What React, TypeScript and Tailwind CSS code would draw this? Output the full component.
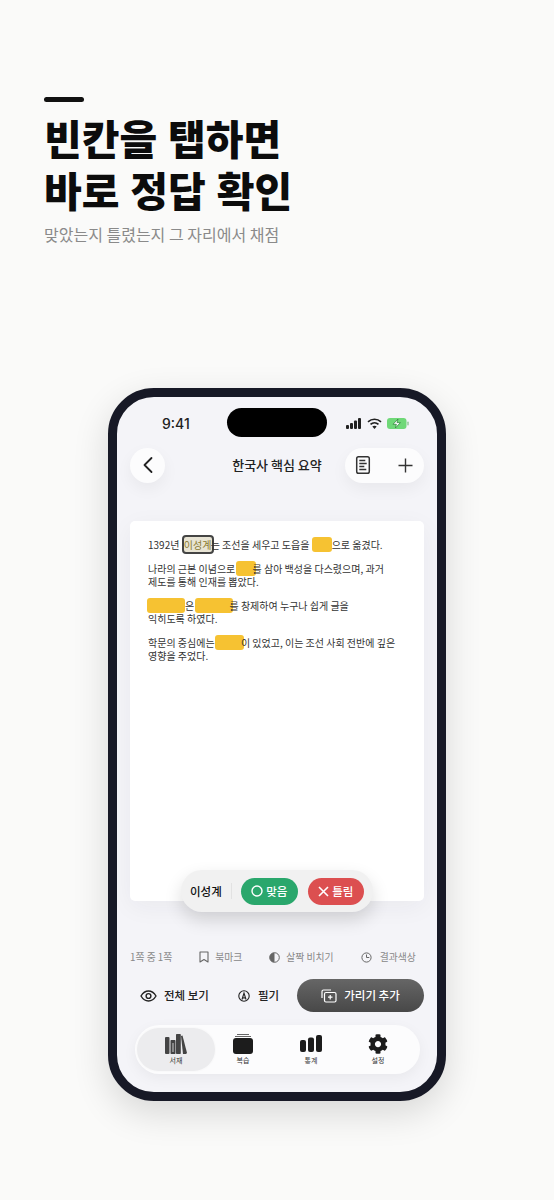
import { FaCog } from "react-icons/fa";

const KR = { fontFamily: '"Noto Sans CJK KR", "Noto Sans", sans-serif' };

function Blank({ w }: { w: string }) {
  return <span className={`inline-block align-top h-[15px] -my-[1px] rounded-[3px] bg-[#f6c232] ${w}`} />;
}

export default function App() {
  return (
    <div className="w-[554px] h-[1200px] bg-[#fafaf9] overflow-hidden flex flex-col" style={KR}>
      <div className="pl-[44px] pt-[97px] shrink-0">
        <div className="w-[40px] h-[5px] rounded-full bg-[#111]" />
        <h1 className="mt-[9px] text-[41px] leading-[52px] font-black text-[#0c0c0c] whitespace-nowrap [word-spacing:1.5px]">
          빈칸을 탭하면
          <br />
          바로 정답 확인
        </h1>
        <p className="mt-[7px] text-[16px] leading-[24px] text-[#8a8a8a]">맞았는지 틀렸는지 그 자리에서 채점</p>
      </div>
      <div className="ml-[108px] mt-[142px] w-[338px] h-[713px] shrink-0 rounded-[46px] border-[9px] border-[#171926] bg-[#f4f4f8] shadow-[0_12px_36px_rgba(0,0,0,0.14)] relative overflow-hidden flex flex-col">
        <div className="h-[46px] shrink-0 flex items-center justify-between pl-[45px] pr-[28px] pt-[6px] relative">
          <span className="text-[14px] font-medium text-[#222]" style={{ fontFamily: 'Inter, sans-serif' }}>9:41</span>
          <div className="absolute left-[110px] top-[11px] w-[100px] h-[29px] rounded-full bg-black" />
          <div className="flex items-center gap-[5px]">
            <svg width="16" height="11" viewBox="0 0 16 11"><rect x="0" y="7" width="3" height="4" rx="1" fill="#222"/><rect x="4" y="5" width="3" height="6" rx="1" fill="#222"/><rect x="8" y="2.500" width="3" height="8.500" rx="1" fill="#222"/><rect x="12" y="0" width="3" height="11" rx="1" fill="#222"/></svg>
            <svg width="15" height="11" viewBox="0 0 15 11" fill="none"><path d="M1 3.800C4.800.4 10.200.4 14 3.800" stroke="#222" strokeWidth="1.700"/><path d="M3.500 6.300C5.800 4.300 9.200 4.300 11.500 6.300" stroke="#222" strokeWidth="1.700"/><path d="M7.500 11 5.300 8.600c1.200-1 3.200-1 4.400 0z" fill="#222"/></svg>
            <svg width="22" height="11" viewBox="0 0 22 11"><rect x="0" y="0" width="19.500" height="11" rx="3" fill="#6fd878"/><rect x="20.200" y="3.500" width="1.600" height="4" rx="0.800" fill="#9ac9a0"/><path d="M11 1 6 6.300h3.400L8.400 10l5-5.400h-3.400z" fill="#fff" stroke="#2b7a38" strokeWidth="0.700"/></svg>
          </div>
        </div>
        <div className="h-[36px] mt-[4px] shrink-0 flex items-center justify-between px-[13px] relative">
          <button className="w-[35px] h-[35px] rounded-full bg-[#fcfcfd] shadow-[0_6px_16px_rgba(0,0,0,0.05)] flex items-center justify-center">
            <svg width="14" height="18" viewBox="0 0 14 18" fill="none"><path d="M10.500 2 3.500 9l7 7" stroke="#222" strokeWidth="1.800" strokeLinecap="round" strokeLinejoin="round"/></svg>
          </button>
          <span className="absolute left-0 right-0 text-center text-[13px] font-medium text-[#222]">한국사 핵심 요약</span>
          <div className="w-[79px] h-[35px] rounded-full bg-[#fcfcfd] shadow-[0_6px_16px_rgba(0,0,0,0.05)] flex items-center justify-between pl-[10px] pr-[11px]">
            <svg width="16" height="20" viewBox="0 0 16 20" fill="none"><rect x="1.700" y="1.700" width="12.600" height="16.600" rx="1.800" stroke="#333" strokeWidth="1.500"/><path d="M4.300 5.500h6M4.300 8.500h7.400M4.300 11.500h5M4.300 14.500h7" stroke="#333" strokeWidth="1.600"/></svg>
            <svg width="15" height="15" viewBox="0 0 15 15" fill="none"><path d="M7.500.5v14M.5 7.500h14" stroke="#333" strokeWidth="1.400"/></svg>
          </div>
        </div>
        <div className="relative mx-[13px] mt-[38px] h-[380px] shrink-0 rounded-[5px] bg-white shadow-[0_6px_24px_rgba(30,30,60,0.05)] pl-[18px] pt-[17px] text-[10px] leading-[13px] text-[#333]">
          <p className="whitespace-nowrap">
            1392년{" "}
            <span className="inline-block align-top -my-[3px] ml-[0px] -mr-[3px] h-[19px] w-[32px] text-center leading-[15px] rounded-[4px] border-2 border-[#444] bg-[#e8e4d4] text-[#8a7a30]">이성계</span>
            는 조선을 세우고 도읍을 <Blank w="w-[20px]" />으로 옮겼다.
          </p>
          <p className="mt-[11px] whitespace-nowrap">
            나라의 근본 이념으로 <span className="inline-block -ml-[2px] -mr-[3px] align-top"><Blank w="w-[20px]" /></span>를 삼아 백성을 다스렸으며, 과거
          </p>
          <p className="whitespace-nowrap">제도를 통해 인재를 뽑았다.</p>
          <p className="mt-[11px] whitespace-nowrap">
            <span className="inline-block -ml-[1px] align-top"><Blank w="w-[38px]" /></span>은 <span className="inline-block -ml-[1px] -mr-[4px] align-top"><Blank w="w-[38px]" /></span>를 창제하여 누구나 쉽게 글을
          </p>
          <p className="whitespace-nowrap">익히도록 하였다.</p>
          <p className="mt-[11px] whitespace-nowrap">
            학문의 중심에는 <span className="inline-block -ml-[2px] -mr-[3px] align-top"><Blank w="w-[29px]" /></span>이 있었고, 이는 조선 사회 전반에 깊은
          </p>
          <p className="whitespace-nowrap">영향을 주었다.</p>
          <div className="absolute left-[51px] top-[349px] w-[192px] h-[42px] rounded-full bg-[#f1f1f1] shadow-[0_8px_18px_rgba(0,0,0,0.14)] flex items-center pl-[9px]">
            <span className="text-[11.500px] font-medium text-[#111] whitespace-nowrap">이성계</span>
            <div className="w-px h-[16px] bg-[#e2e2e2] mx-[9px]" />
            <button className="w-[57px] h-[27px] rounded-full bg-[#2aa76c] text-white text-[11.500px] font-medium flex items-center justify-center gap-[3px]">
              <svg width="12" height="12" viewBox="0 0 12 12" fill="none"><circle cx="6" cy="6" r="5" stroke="#fff" strokeWidth="1.400"/></svg>
              맞음
            </button>
            <button className="ml-[10px] w-[56px] h-[27px] rounded-full bg-[#dc4f50] text-white text-[11.500px] font-medium flex items-center justify-center gap-[3px]">
              <svg width="11" height="11" viewBox="0 0 11 11" fill="none"><path d="M1 1l9 9M10 1l-9 9" stroke="#fff" strokeWidth="1.600"/></svg>
              틀림
            </button>
          </div>
        </div>
        <div className="mt-[46px] pl-[13px] h-[20px] flex items-center gap-[27px] text-[9.800px] text-[#888] whitespace-nowrap">
          <span>1쪽 중 1쪽</span>
          <span className="flex items-center gap-[6px]">
            <svg width="10" height="12" viewBox="0 0 10 12" fill="none"><path d="M1 1h8v10L5 8.500 1 11z" stroke="#666" strokeWidth="1.100" strokeLinejoin="round"/></svg>
            북마크
          </span>
          <span className="flex items-center gap-[6px]">
            <svg width="11" height="11" viewBox="0 0 11 11" fill="none"><circle cx="5.500" cy="5.500" r="4.800" stroke="#666" strokeWidth="1"/><path d="M5.500.7a4.800 4.800 0 0 0 0 9.600z" fill="#666"/></svg>
            살짝 비치기
          </span>
          <span className="flex items-center gap-[8px]">
            <svg width="11" height="11" viewBox="0 0 11 11" fill="none"><circle cx="5.500" cy="5.500" r="4.600" stroke="#666" strokeWidth="1"/><path d="M5.500 2.500v3h2.800" stroke="#666" strokeWidth="1"/></svg>
            결과색상
          </span>
        </div>
        <div className="mt-[12px] pl-[23px] pr-[13px] h-[33px] flex items-center">
          <span className="flex items-center gap-[7px] text-[11.500px] font-medium text-[#222] whitespace-nowrap">
            <svg width="17" height="12" viewBox="0 0 17 12" fill="none"><path d="M1 6c2-3.400 4.500-5 7.500-5S14 2.600 16 6c-2 3.400-4.500 5-7.500 5S3 9.400 1 6z" stroke="#222" strokeWidth="1.400"/><circle cx="8.500" cy="6" r="2.400" stroke="#222" strokeWidth="1.400"/></svg>
            전체 보기
          </span>
          <span className="ml-[29px] flex items-center gap-[8px] text-[11.500px] font-medium text-[#222] whitespace-nowrap">
            <svg width="12" height="12" viewBox="0 0 12 12" fill="none"><circle cx="6" cy="6" r="5.200" stroke="#222" strokeWidth="1.100"/><path d="M4 9.500 6 3l2 6.500M4.600 7.500c.8.600 2 .6 2.800 0" stroke="#222" strokeWidth="1.100"/></svg>
            필기
          </span>
          <button className="ml-auto w-[127px] h-[33px] rounded-full bg-gradient-to-b from-[#666] to-[#484848] text-white text-[11.500px] font-medium flex items-center justify-center gap-[7px] whitespace-nowrap">
            <svg width="16" height="14" viewBox="0 0 16 14" fill="none"><rect x="3.500" y="3.500" width="11.500" height="9.500" rx="1.500" stroke="#fff" strokeWidth="1.200"/><path d="M1 9V2.500A1.500 1.500 0 0 1 2.500 1H10" stroke="#fff" strokeWidth="1.200"/><path d="M9.200 6v4.500M7 8.200h4.500" stroke="#fff" strokeWidth="1.200"/></svg>
            가리기 추가
          </button>
        </div>
        <div className="mt-[13px] ml-[18px] mr-[17px] h-[49px] rounded-full bg-[#fcfcfd] shadow-[0_4px_14px_rgba(0,0,0,0.05)] flex items-center pl-[1px] text-[7px] text-[#333]">
          <div className="h-[45px] w-[80px] rounded-full bg-[#ececee] border border-white/70 flex flex-col items-center justify-center">
            <svg width="22" height="20" viewBox="0 0 22 20"><rect x="0" y="3" width="4.500" height="17" rx="1" fill="#444"/><rect x="5.500" y="6" width="5" height="14" rx=".8" fill="#444"/><rect x="7" y="9" width="2" height="9" fill="#888"/><rect x="11" y="0" width="4.800" height="20" rx=".8" fill="#444"/><path d="M16 2l1.500-.5L22 19l-1 1h-3z" fill="#444"/></svg>
            <span className="mt-[2px] leading-[9px]">서재</span>
          </div>
          <div className="ml-[7px] w-[40px] flex flex-col items-center justify-center">
            <svg width="20" height="20" viewBox="0 0 20 20"><rect x="4" y="0" width="12" height="1" fill="#666"/><rect x="2" y="2" width="16" height="1" fill="#666"/><path d="M3 4h14a3 3 0 0 1 3 3v10a3 3 0 0 1-3 3H3a3 3 0 0 1-3-3V7a3 3 0 0 1 3-3z" fill="#1c1c1c"/></svg>
            <span className="mt-[2px] leading-[9px]">복습</span>
          </div>
          <div className="ml-[28px] w-[40px] flex flex-col items-center justify-center">
            <svg width="22" height="17" viewBox="0 0 22 17" fill="#1c1c1c" className="mt-[1px]"><rect x="0" y="5" width="6" height="12" rx="2"/><rect x="8" y="2.500" width="6" height="14.500" rx="2"/><rect x="16" y="0" width="6" height="17" rx="2"/></svg>
            <span className="mt-[4px] leading-[9px]">통계</span>
          </div>
          <div className="ml-[27px] w-[40px] flex flex-col items-center justify-center">
            <FaCog size={20} color="#1c1c1c" />
            <span className="mt-[2px] leading-[9px]">설정</span>
          </div>
        </div>
      </div>
    </div>
  );
}
